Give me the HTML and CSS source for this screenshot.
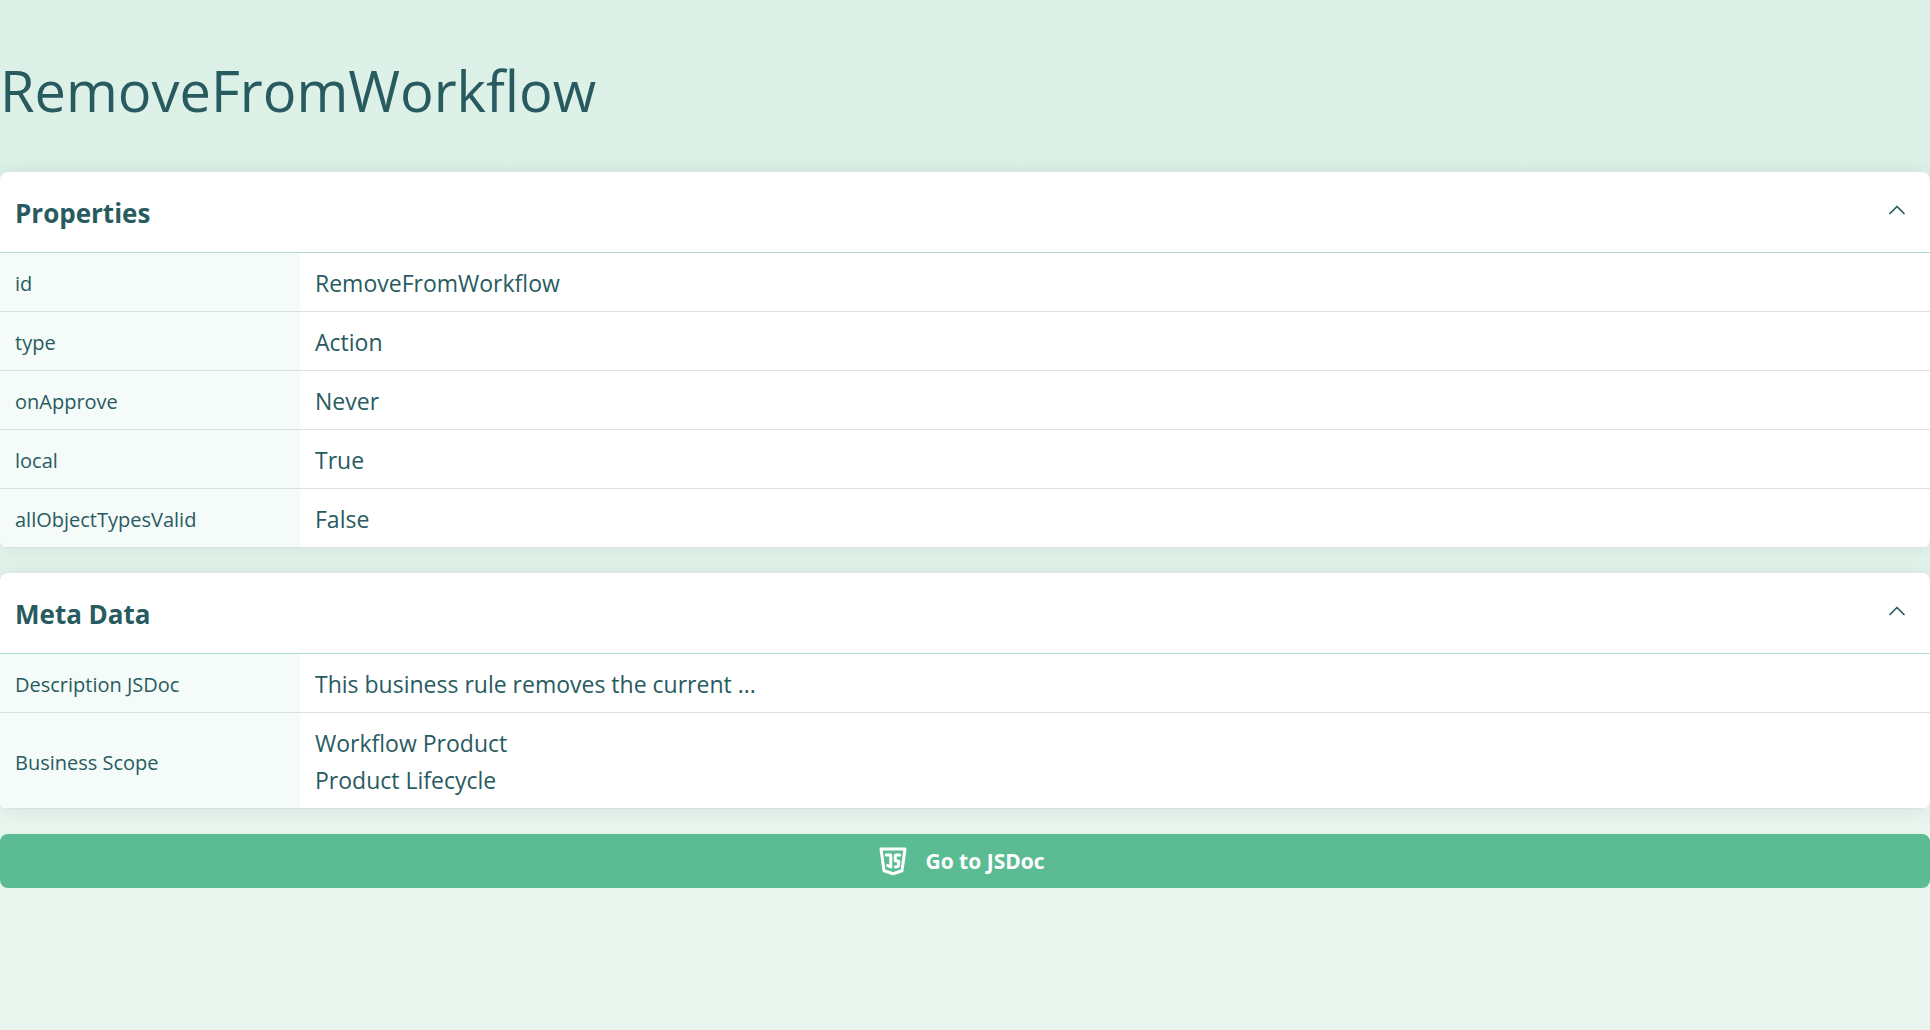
FILE: index.html
```html
<!DOCTYPE html>
<html lang="en">
<head>
  <meta charset="UTF-8">
  <meta name="viewport" content="width=device-width, initial-scale=1.0">
  <title>RemoveFromWorkflow</title>
  <link rel="stylesheet" href="styles.css">
</head>
<body>
  <main class="page">
    <h1>RemoveFromWorkflow</h1>

    <section class="card" id="properties">
      <div class="card-header">
        <h2>Properties</h2>
        <button type="button" class="toggle" aria-label="Collapse Properties" aria-expanded="true">
          <svg viewBox="0 0 24 24"><path d="M6 15l6-6 6 6"/></svg>
        </button>
      </div>
      <table>
        <tr><th scope="row">id</th><td>RemoveFromWorkflow</td></tr>
        <tr><th scope="row">type</th><td>Action</td></tr>
        <tr><th scope="row">onApprove</th><td>Never</td></tr>
        <tr><th scope="row">local</th><td>True</td></tr>
        <tr><th scope="row">allObjectTypesValid</th><td>False</td></tr>
      </table>
    </section>

    <section class="card" id="metadata">
      <div class="card-header">
        <h2>Meta Data</h2>
        <button type="button" class="toggle" aria-label="Collapse Meta Data" aria-expanded="true">
          <svg viewBox="0 0 24 24"><path d="M6 15l6-6 6 6"/></svg>
        </button>
      </div>
      <table>
        <tr><th scope="row">Description JSDoc</th><td>This business rule removes the current ...</td></tr>
        <tr><th scope="row">Business Scope</th><td>Workflow Product<br>Product Lifecycle</td></tr>
      </table>
    </section>

    <button type="button" class="jsdoc-button">
      <svg viewBox="0 0 24 24">
        <path d="M20 4l-2 14.5-6 2-6-2L4 4z"/>
        <path d="M7.5 8h3v8l-2-1"/>
        <path d="M16.5 8H14a.5.5 0 0 0-.5.5v3a.5.5 0 0 0 .5.5h1.423a.5.5 0 0 1 .495.57L15.5 15.5l-2 .5"/>
      </svg>
      <span>Go to JSDoc</span>
    </button>
  </main>

  <script>
    // Collapse / expand the cards
    document.querySelectorAll('.toggle').forEach(function (btn) {
      btn.addEventListener('click', function () {
        const closed = btn.closest('.card').classList.toggle('closed');
        btn.setAttribute('aria-expanded', String(!closed));
      });
    });
  </script>
</body>
</html>
```
FILE: styles.css
```css
* {
  box-sizing: border-box;
}

body {
  margin: 0;
  min-height: 100vh;
  font-family: "Segoe UI", "Open Sans", "Noto Sans", sans-serif;
  color: #285b60;
  background: linear-gradient(#dbf0e6, #e9f6f0);
}

.page {
  display: flex;
  flex-direction: column;
  gap: 25px;
}

h1 {
  margin: 50px 0 17px;
  font-size: 56px;
  font-weight: 400;
  line-height: 80px;
}

.card {
  background-color: white;
  border-radius: 8px;
  box-shadow: 0 0 20px rgba(0, 0, 0, 0.08);
  overflow: hidden;
}

.card-header {
  display: flex;
  justify-content: space-between;
  align-items: center;
  height: 81px;
  padding: 2px 19px 0 15px;
  border-bottom: 1px solid #addecb;
}

h2 {
  margin: 0;
  font-size: 26px;
  font-weight: 700;
}

.toggle {
  padding: 0 0 6px;
  border: none;
  background: none;
  color: inherit;
  cursor: pointer;
}

.toggle svg {
  display: block;
  width: 28px;
  height: 28px;
}

svg {
  fill: none;
  stroke: currentColor;
  stroke-width: 1.5;
  stroke-linecap: round;
  stroke-linejoin: round;
}

table {
  width: 100%;
  border-collapse: separate;
  border-spacing: 0;
}

th,
td {
  padding: 12px 15px 9px;
  border-bottom: 1px solid #dbe0e3;
  line-height: 37px;
  text-align: left;
  vertical-align: middle;
}

th {
  width: 300px;
  font-size: 20px;
  font-weight: 400;
  background-color: #f5fbf9;
}

td {
  font-size: 23px;
}

.closed table {
  display: none;
}

.closed .toggle svg {
  transform: rotate(180deg);
}

.jsdoc-button {
  display: flex;
  justify-content: center;
  align-items: center;
  gap: 14px;
  height: 54px;
  padding: 0 10px 0 0;
  border: none;
  border-radius: 8px;
  background-color: #5bbc93;
  color: white;
  font-family: inherit;
  font-size: 21px;
  font-weight: 700;
  cursor: pointer;
}

.jsdoc-button svg {
  width: 36px;
  height: 36px;
  stroke-width: 2;
}
```
